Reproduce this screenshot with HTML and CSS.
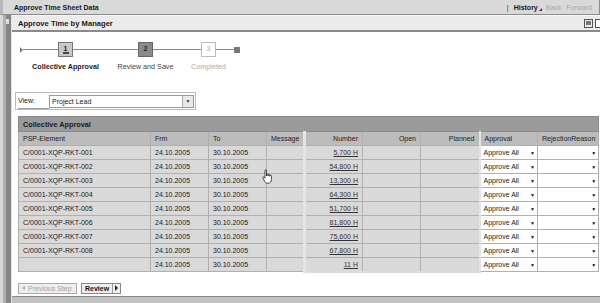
FILE: index.html
```html
<!DOCTYPE html>
<html>
  <head>
    <meta charset="utf-8" />
    <title>Approve Time Sheet Data</title>
    <link rel="stylesheet" href="styles.css">
  </head>
  <body>
    <div class="topbar">
      <span class="app-title">Approve Time Sheet Data</span>
      <div class="nav">
        <span class="sep">|</span>
        <span class="history">History<span class="corner"></span></span>
        <span class="nav-off">Back</span>
        <span class="nav-off">Forward</span>
      </div>
    </div>

    <div class="frame">
      <div class="rail"><span class="rail-mark"></span></div>

      <div class="main">
        <!-- page header -->
        <div class="subheader">
          <span class="page-title">Approve Time by Manager</span>
          <div class="tools">
            <span class="tool"><span class="tool-dot"></span></span>
            <span class="tool tool-cut"></span>
          </div>
        </div>

        <div class="content">
          <!-- roadmap -->
          <div class="steps">
            <div class="track">
              <span class="start"></span>
              <span class="seg seg-a"></span>
              <span class="box box-done">1<span class="box-mark"></span></span>
              <span class="seg seg-b"></span>
              <span class="box box-now">2</span>
              <span class="seg seg-c"></span>
              <span class="box box-next">3</span>
              <span class="seg seg-d"></span>
              <span class="end"></span>
            </div>
            <div class="labels">
              <span class="label label-1">Collective Approval</span>
              <span class="label label-2">Review and Save</span>
              <span class="label label-3">Completed</span>
            </div>
          </div>

          <!-- view selection -->
          <div class="view-box">
            <span class="view-label">View:</span>
            <div class="select select-view">
              <span class="select-text">Project Lead</span>
              <span class="select-btn">&#9660;</span>
            </div>
          </div>

          <!-- collective approval table -->
          <table class="grid">
            <colgroup>
              <col style="width:132px">
              <col style="width:58px">
              <col style="width:58px">
              <col style="width:38px">
              <col style="width:58px">
              <col style="width:58px">
              <col style="width:59px">
              <col style="width:58px">
              <col style="width:61px">
            </colgroup>
            <thead>
              <tr><th colspan="9" class="grid-title">Collective Approval</th></tr>
              <tr class="grid-head">
                <th>PSP-Element</th>
                <th>Frm</th>
                <th>To</th>
                <th>Message</th>
                <th class="num grp-l">Number</th>
                <th class="num">Open</th>
                <th class="num grp-r">Planned</th>
                <th>Approval</th>
                <th>RejectionReason</th>
              </tr>
            </thead>
            <tbody id="rows"></tbody>
          </table>

          <!-- step buttons -->
          <div class="buttons">
            <span class="btn btn-off"><span class="arrow-l"></span>Previous Step</span>
            <span class="btn btn-on">Review <span class="arrow-box"><span class="arrow-r"></span></span></span>
          </div>

          <svg class="pointer" width="11" height="15" viewBox="0 0 11 15">
            <path d="M3 1.4 C3 0.5 4.5 0.5 4.5 1.4 L4.5 7 L4.7 5.6 C4.7 4.8 6.1 4.8 6.1 5.6 L6.1 7 L6.3 6 C6.3 5.2 7.7 5.2 7.7 6 L7.7 7.2 L7.9 6.8 C7.9 6 9.4 6 9.4 6.8 L9.4 10.4 C9.4 12.6 8.3 14.2 6.7 14.2 L5 14.2 C3.8 14.2 3.1 13.3 2.5 12.1 L0.9 9 C0.5 8.2 1.4 7.5 2.1 8.2 L3 9.2 Z" fill="#fff" stroke="#222" stroke-width="0.8"/>
          </svg>
        </div>

        <div class="footerbar"></div>
      </div>
    </div>

    <script>
      var data = [
        ["C/0001-XQP-RKT-001", "5,700 H"],
        ["C/0001-XQP-RKT-002", "54,800 H"],
        ["C/0001-XQP-RKT-003", "13,300 H"],
        ["C/0001-XQP-RKT-004", "64,300 H"],
        ["C/0001-XQP-RKT-005", "51,700 H"],
        ["C/0001-XQP-RKT-006", "81,800 H"],
        ["C/0001-XQP-RKT-007", "75,600 H"],
        ["C/0001-XQP-RKT-008", "67,800 H"],
        ["", "11 H"]
      ];
      var html = "";
      for (var i = 0; i < data.length; i++) {
        var last = i == data.length - 1 ? " last" : "";
        html += "<tr class='row" + last + "'>" +
          "<td>" + data[i][0] + "</td>" +
          "<td>24.10.2005</td><td>30.10.2005</td><td></td>" +
          "<td class='num grp-l'><a>" + data[i][1] + "</a></td>" +
          "<td class='num'></td><td class='num grp-r'></td>" +
          "<td class='pick'><div class='cell-select'><span>Approve All</span><span class='dd'>&#9660;</span></div></td>" +
          "<td class='pick'><div class='cell-select'><span></span><span class='dd'>&#9660;</span></div></td>" +
          "</tr>";
      }
      document.getElementById("rows").innerHTML = html;
    </script>
  </body>
</html>
```

FILE: styles.css
```css
* { box-sizing: border-box; }

body {
  margin: 0;
  width: 600px;
  height: 303px;
  overflow: hidden;
  background: #fff;
  color: #1a1a1a;
  font-family: "Liberation Sans", Arial, sans-serif;
  font-size: 7px;
}

/* top bar */
.topbar {
  height: 15px;
  display: flex;
  justify-content: space-between;
  align-items: center;
  padding-left: 11px;
  background: #d9d9d9;
  border-left: 3px solid #b8b8b8;
  border-bottom: 1px solid #8c8c8c;
}
.app-title { font-weight: bold; font-size: 7px; }
.nav {
  display: flex;
  align-items: center;
  gap: 5px;
  padding-right: 7px;
  height: 100%;
  border-right: 1px solid #888;
}
.sep { color: #333; }
.history { font-weight: bold; position: relative; padding-right: 3px; }
.corner {
  position: absolute;
  right: -1px;
  bottom: 0;
  width: 0; height: 0;
  border-left: 3px solid transparent;
  border-bottom: 3px solid #333;
}
.nav-off { color: #a8a8a8; }

/* frame */
.frame { display: flex; height: 288px; }
.rail {
  width: 12px;
  position: relative;
  background: linear-gradient(to right, #d8d8d8 0 3px, #b0b0b0 3px 6px, #858585 6px 11px, #e0e0e0 11px 12px);
}
.rail-mark {
  position: absolute;
  left: 6px; top: 4px;
  width: 3px; height: 5px;
  background: #ddd;
}
.main { flex: 1; display: flex; flex-direction: column; }

.subheader {
  height: 17px;
  display: flex;
  justify-content: space-between;
  align-items: center;
  padding-left: 6px;
  padding-top: 1px;
  background: #ebebeb;
  border-top: 1px solid #f8f8f8;
  border-bottom: 2px solid #8a8a8a;
}
.page-title { font-weight: bold; font-size: 7.6px; }
.tools { display: flex; gap: 2px; }
.tool {
  width: 9px; height: 9px;
  border: 1px solid #555;
  background: #e8e8e8;
  position: relative;
}
.tool-dot {
  position: absolute;
  left: 1px; top: 1px;
  width: 5px; height: 4px;
  background: #777;
}
.tool-cut { width: 5px; border-right: none; background: #fff; }

.content {
  flex: 1;
  position: relative;
  padding: 10px 0 0 3px;
}

/* roadmap */
.steps { margin-left: 5px; }
.track { display: flex; align-items: center; height: 15px; }
.start {
  width: 0; height: 0;
  border-top: 3px solid transparent;
  border-bottom: 3px solid transparent;
  border-left: 3px solid #777;
}
.seg { height: 1px; background: #888; }
.seg-a { width: 35px; }
.seg-b { width: 65px; }
.seg-c { width: 48px; }
.seg-d { width: 18px; }
.box {
  width: 15px; height: 15px;
  display: flex;
  justify-content: center;
  padding-top: 2px;
  font-size: 7px;
  font-weight: bold;
  position: relative;
}
.box-done { background: #c8c8c8; border: 1px solid #777; }
.box-mark {
  position: absolute;
  left: 4px; bottom: 2px;
  width: 6px; height: 2px;
  border-top: 1px solid #444;
  border-bottom: 1px solid #444;
}
.box-now { background: #8a8a8a; border: 1px solid #666; color: #222; }
.box-next { background: #fff; border: 1px solid #bbb; color: #aaa; font-weight: normal; }
.end { width: 6px; height: 6px; background: #777; }

.labels { display: flex; margin-top: 5px; margin-left: 5px; }
.label { text-align: center; font-size: 7.2px; }
.label-1 { width: 81px; font-weight: bold; }
.label-2 { width: 79px; color: #444; }
.label-3 { width: 47px; color: #aaa; }

/* view box */
.view-box {
  margin-top: 21px;
  width: 181px;
  height: 18px;
  display: flex;
  align-items: center;
  padding-left: 2px;
  border: 1px solid #bbb;
}
.view-label {
  width: 31px;
  align-self: stretch;
  display: flex;
  align-items: center;
  border-bottom: 1px solid #999;
}
.select {
  display: flex;
  height: 13px;
  border: 1px solid #999;
  background: #fff;
}
.select-view { width: 145px; }
.select-text { flex: 1; padding: 2px 0 0 2px; }
.select-btn {
  width: 11px;
  font-size: 5px;
  display: flex;
  align-items: center;
  justify-content: center;
  border-left: 1px solid #aaa;
  background: #e8e8e8;
  color: #333;
}

/* table */
.grid {
  margin: 6px 0 0 3px;
  width: 580px;
  table-layout: fixed;
  border-collapse: collapse;
}
.grid th, .grid td {
  height: 14px;
  padding: 0 4px;
  font-size: 7px;
  font-weight: normal;
  text-align: left;
  white-space: nowrap;
  overflow: hidden;
  border: 1px solid #b0b0b0;
}
.grid .grid-title {
  height: 15px;
  background: #9a9a9a;
  font-weight: bold;
  font-size: 7.3px;
  border-color: #8a8a8a;
}
.grid-head th { background: #bcbcbc; color: #222; }
.row td { background: #d9d9d9; }
.grid .num { text-align: right; }
.grid .grp-l { border-left: 3px solid #e4e4e4; }
.grid .grp-r { border-right: 2px solid #e4e4e4; }
.last .num { border-bottom: 2px solid #dcdcdc; }
.num a { color: #333; text-decoration: underline; }
.grid .pick { background: #fff; padding: 0 2px 0 3px; }
.cell-select { display: flex; justify-content: space-between; align-items: center; }
.dd { font-size: 5px; color: #111; }

/* buttons */
.buttons { display: flex; gap: 4px; margin: 10px 0 0 3px; }
.btn {
  height: 11px;
  display: flex;
  align-items: center;
  gap: 3px;
  padding: 0 3px;
  border: 1px solid #aaa;
  background: #eee;
}
.btn-off { color: #a0a0a0; width: 59px; }
.btn-on { color: #111; font-weight: bold; border-color: #888; padding-right: 1px; }
.arrow-l {
  width: 0; height: 0;
  border-top: 2px solid transparent;
  border-bottom: 2px solid transparent;
  border-right: 3px solid #aaa;
}
.arrow-box {
  width: 7px; height: 9px;
  display: flex;
  align-items: center;
  justify-content: center;
  border-left: 1px solid #999;
}
.arrow-r {
  width: 0; height: 0;
  border-top: 3px solid transparent;
  border-bottom: 3px solid transparent;
  border-left: 3px solid #222;
}

.pointer { position: absolute; left: 250px; top: 137px; }

.footerbar {
  height: 7px;
  background: #c2c2c2;
  border-top: 1px solid #888;
}
```
